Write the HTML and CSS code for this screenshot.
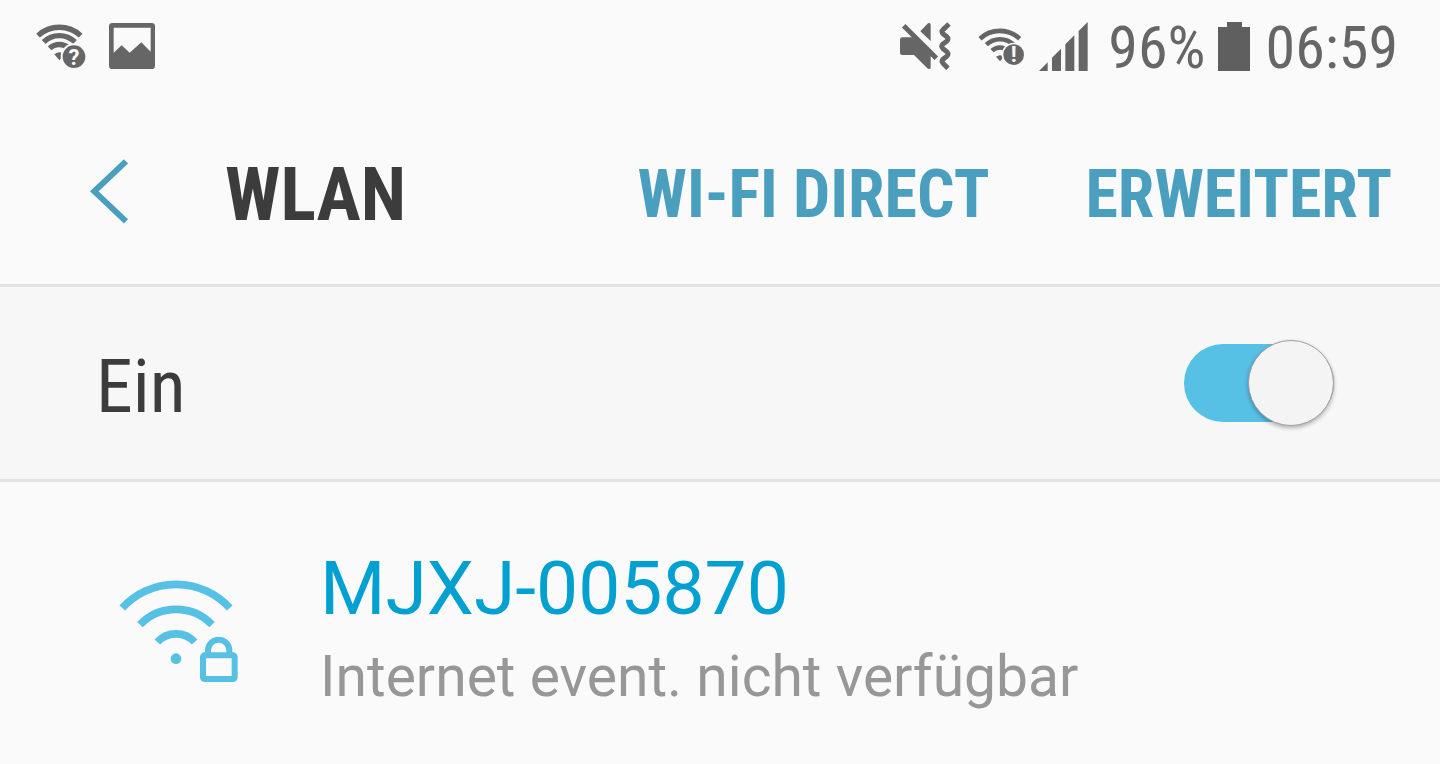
FILE: index.html
```html
<!DOCTYPE html>
<html lang="de">
<head>
<title>WLAN</title>
<meta charset="utf-8">
<meta name="viewport" content="width=device-width, initial-scale=1">
<link rel="stylesheet" href="styles.css">
</head>
<body>
<div class="statusbar">
<div class="notifications">
<svg width="50" height="50" viewBox="0 0 150 150" aria-hidden="true">
<g fill="none" stroke="currentColor" stroke-width="16">
<path d="M6 44A94 94 0 0 1 134 44"/>
<path d="M23 63A67 67 0 0 1 117 63"/>
<path d="M41 82A42 42 0 0 1 99 82"/>
</g>
<path d="M55 100Q70 88 86 100L70 118z" fill="currentColor"/>
<circle class="halo" cx="114" cy="107" r="40"/>
<circle cx="114" cy="107" r="34" fill="currentColor"/>
<text class="badge" x="114" y="131">?</text>
</svg>
<svg width="46" height="46" viewBox="0 0 138 138" aria-hidden="true">
<path fill="currentColor" fill-rule="evenodd" d="M10 0H128Q138 0 138 10V128Q138 138 128 138H10Q0 138 0 128V10Q0 0 10 0zM14 14V89L38 67L62 89L97 58L125 86V14z"/>
</svg>
</div>
<div class="system">
<svg class="mute" width="51" height="49" viewBox="0 0 153 147" aria-hidden="true">
<path fill="currentColor" d="M7 46H40L92 98V138Q89 144 82 139L42 99H7Q0 99 0 92V53Q0 46 7 46zM61 28L84 4Q91 0 92 8V57z"/>
<path fill="none" stroke="currentColor" stroke-width="15" d="M11 11L109 109"/>
<path fill="none" stroke="currentColor" stroke-width="15" stroke-linejoin="round" d="M147 6L130 22Q122 29 130 36L140 44Q148 51 140 58L129 66Q121 73 129 80L140 89Q148 96 140 103L130 111Q122 118 130 125L144 139"/>
</svg>
<svg class="wifi" width="47" height="39" viewBox="0 0 141 117" aria-hidden="true">
<g fill="none" stroke="currentColor" stroke-width="14">
<path d="M6 35A88 88 0 0 1 125 35"/>
<path d="M25 53A60 60 0 0 1 107 53"/>
<path d="M42 71A35 35 0 0 1 90 71"/>
</g>
<path d="M54 89Q66 80 78 89L66 103z" fill="currentColor"/>
<circle class="halo" cx="107" cy="83" r="36"/>
<circle cx="107" cy="83" r="31" fill="currentColor"/>
<text class="badge" x="107" y="105">!</text>
</svg>
<svg class="signal" width="49" height="49" viewBox="0 0 147 147" aria-hidden="true">
<path fill="currentColor" d="M0 147L26 121V147zM39 147V107L66 80V147zM79 147V67L106 40V147zM119 147V27L146 0V147z"/>
</svg>
<span>96%</span>
<svg class="battery" width="32" height="49" viewBox="0 0 32 49" aria-hidden="true">
<path fill="currentColor" d="M0 5H9V0H24V5H32V49H0z"/>
</svg>
<span>06:59</span>
</div>
</div>

<header class="topbar">
<button class="back" aria-label="Zurück">
<svg width="39" height="65" viewBox="0 0 117 195" aria-hidden="true">
<path fill="none" stroke="currentColor" stroke-width="18" d="M108 7L13 97L108 187"/>
</svg>
</button>
<h1>WLAN</h1>
<button class="action">WI-FI DIRECT</button>
<button class="action">ERWEITERT</button>
</header>

<div class="toggle-row">
<label for="wlan">Ein</label>
<input type="checkbox" role="switch" name="wlan" id="wlan" class="switch" checked>
</div>

<ul class="networks">
<li class="network">
<svg width="119" height="103" viewBox="57 60 357 309" aria-hidden="true">
<g fill="none" stroke="currentColor" stroke-width="23">
<path d="M67 144A218 218 0 0 1 389 144"/>
<path d="M120 194A150 150 0 0 1 336 194"/>
<path d="M172 246A76 76 0 0 1 284 246"/>
</g>
<circle cx="228" cy="296" r="16" fill="currentColor"/>
<g fill="none" stroke="currentColor" stroke-width="18">
<rect x="309" y="286" width="95" height="71" rx="5"/>
<path d="M324 284V271A32 32 0 0 1 388 271V284"/>
</g>
</svg>
<div>
<h2>MJXJ-005870</h2>
<p>Internet event. nicht verfügbar</p>
</div>
</li>
</ul>
</body>
</html>
```

FILE: styles.css
```css
*, *::before {
box-sizing: border-box;
}
body {
margin: 0;
background-color: #fafafa;
font-family: "Roboto Condensed", Roboto, sans-serif;
color: #3c3c3c;
}
button {
padding: 0;
border: 0;
background: none;
font: inherit;
color: #4a9fbf;
cursor: pointer;
}
svg {
display: block;
flex: none;
}

/* status bar */
.statusbar {
display: flex;
justify-content: space-between;
height: 92px;
padding: 0 42px 0 36px;
color: #666;
font-size: 60px;
line-height: 92px;
}
.notifications, .system {
display: flex;
align-items: center;
}
.notifications {
gap: 23px;
}
.system span {
padding-top: 4px;
}
.mute {
margin-right: 27px;
}
.wifi {
margin-right: 14px;
}
.signal {
margin-right: 20px;
}
.battery {
margin: 0 16px 0 12px;
color: #5f5f5f;
}
.halo {
fill: #fafafa;
}
.badge {
fill: #fafafa;
font-family: Roboto, sans-serif;
font-size: 66px;
font-weight: bold;
text-anchor: middle;
}

/* title and actions */
.topbar {
display: flex;
align-items: center;
height: 195px;
padding: 6px 48px 0 90px;
border-bottom: 3px solid #e3e3e3;
}
.topbar h1 {
margin: 0 auto 0 96px;
padding-top: 6px;
font-size: 74px;
font-weight: bold;
}
.action {
margin-left: 96px;
padding-top: 6px;
font-size: 66px;
font-weight: bold;
white-space: nowrap;
}

/* main switch */
.toggle-row {
display: flex;
align-items: center;
justify-content: space-between;
height: 195px;
padding: 0 106px 0 96px;
border-bottom: 3px solid #e3e3e3;
background-color: #f7f7f7;
font-size: 74px;
}
.toggle-row label {
padding-top: 6px;
}
.switch {
appearance: none;
display: flex;
align-items: center;
width: 150px;
height: 78px;
margin: 0;
background-color: #57c0e5;
border-radius: 39px;
cursor: pointer;
}
/* the knob is taller than its track */
.switch::before {
content: "";
flex: none;
width: 86px;
height: 86px;
border: 1px solid #a0a0a0;
border-radius: 50%;
background-color: #f4f4f4;
box-shadow: 0 2px 4px rgba(0, 0, 0, .3);
}
.switch:checked::before {
margin-left: auto;
}

/* list of networks */
.networks {
margin: 0;
padding: 0;
list-style: none;
font-family: Roboto, sans-serif;
}
.network {
display: flex;
align-items: center;
gap: 82px;
padding: 61px 119px;
color: #57c0e5;
}
.network h2 {
margin: 0 0 2px;
font-size: 75px;
font-weight: normal;
line-height: 90px;
color: #00a0d0;
}
.network p {
margin: 0;
font-size: 57px;
line-height: 84px;
color: #979797;
}
```
